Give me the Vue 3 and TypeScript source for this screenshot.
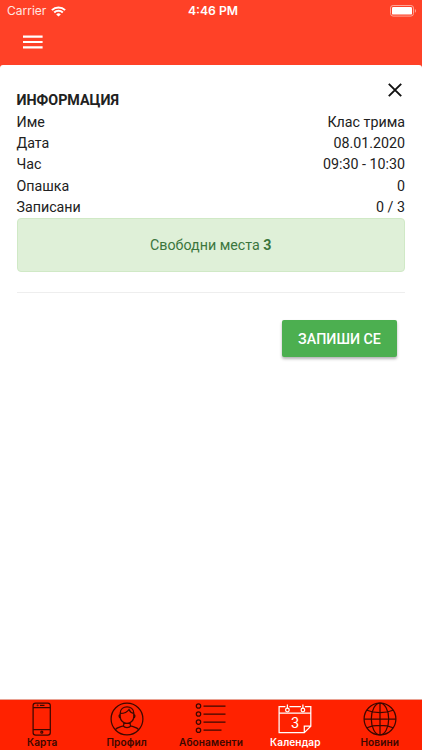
<script setup lang="ts">
interface Row {
  label: string
  value: string
}
interface Tab {
  id: string
  label: string
}

const rows: Row[] = [
  { label: 'Име', value: 'Клас трима' },
  { label: 'Дата', value: '08.01.2020' },
  { label: 'Час', value: '09:30 - 10:30' },
  { label: 'Опашка', value: '0' },
  { label: 'Записани', value: '0 / 3' },
]
const tabs: Tab[] = [
  { id: 'card', label: 'Карта' },
  { id: 'profile', label: 'Профил' },
  { id: 'plans', label: 'Абонаменти' },
  { id: 'calendar', label: 'Календар' },
  { id: 'news', label: 'Новини' },
]
const active = 'calendar'
const freePlaces = 3
</script>

<template>
  <div class="screen">
    <header class="header">
      <div class="status">
        <div class="carrier">
          <span>Carrier</span>
          <svg class="wifi" width="15" height="11" viewBox="0 0 15 11" fill="none" stroke="#fff" stroke-width="2">
            <path d="M.9 4.1a9.4 9.4 0 0 1 13.2 0M3.2 6.5a6.1 6.1 0 0 1 8.6 0" />
            <path d="M7.5 10.6 5.2 8.4a3.3 3.3 0 0 1 4.6 0z" fill="#fff" stroke="none" />
          </svg>
        </div>
        <span class="clock">4:46 PM</span>
        <svg class="battery" width="27" height="12" viewBox="0 0 27 12">
          <rect x=".5" y=".5" width="23" height="10.6" rx="2.6" fill="none" stroke="#ffa597" />
          <rect x="2" y="2" width="20" height="7.6" rx="1.2" fill="#fff" />
          <path d="M24.9 4v3.8c1.5-.6 1.5-3.2 0-3.8z" fill="#ffa597" />
        </svg>
      </div>
      <button class="menu" aria-label="Меню">
        <svg width="20" height="14" viewBox="0 0 20 14" fill="#fff">
          <path d="M0 .6h19.6v2.1H0zM0 6h19.6v2.1H0zM0 11.3h19.6v2.1H0z" />
        </svg>
      </button>
    </header>

    <main class="sheet">
      <div class="top">
        <h1>ИНФОРМАЦИЯ</h1>
        <button class="close" aria-label="Затвори">
          <svg width="14" height="14" viewBox="0 0 14 14" fill="none" stroke="#111" stroke-width="1.9">
            <path d="M.8.8l12.4 12.4M13.2.8.8 13.2" />
          </svg>
        </button>
      </div>
      <dl>
        <div v-for="row in rows" :key="row.label" class="row">
          <dt>{{ row.label }}</dt>
          <dd>{{ row.value }}</dd>
        </div>
      </dl>
      <div class="alert"><span>Свободни места <b>{{ freePlaces }}</b></span></div>
      <div class="actions">
        <button class="join">ЗАПИШИ СЕ</button>
      </div>
    </main>

    <nav class="tabs">
      <div v-for="tab in tabs" :key="tab.id" class="tab" :class="{ active: tab.id === active }">
        <svg class="icon" width="34" height="34" viewBox="0 0 34 34" fill="none" stroke="currentColor" stroke-width="1.25">
          <template v-if="tab.id === 'card'">
            <rect x="8.1" y="1" width="17.2" height="32" rx="2.6" />
            <path d="M8.1 5.5h17.2M8.1 27.5h17.2M15 3.3h4.5" />
            <circle cx="16.8" cy="30.2" r="1" />
            <circle cx="12.6" cy="3.3" r=".3" />
          </template>
          <template v-else-if="tab.id === 'profile'">
            <circle cx="17" cy="17" r="15.9" />
            <path d="M10.2 14.5V11C10.2 2.8 23.8 2.8 23.8 11v3.5c0 9-13.6 9-13.6 0zM10.2 11.4c4.4 0 7.2-1.4 8.8-3.9.9 2.2 2.4 3.5 4.8 3.9M10.2 12.6c-1.6.1-1.4 3.3.3 3.6M23.8 12.6c1.6.1 1.4 3.3-.3 3.6M13.8 20.4v2.3c0 .8-.4 1.2-1.2 1.5-3.5 1.2-6 1.4-7.2 3.4M20.2 20.4v2.3c0 .8.4 1.2 1.2 1.5 3.5 1.2 6 1.4 7.2 3.4M13.2 24c1.6 2 6 2 7.6 0" />
          </template>
          <template v-else-if="tab.id === 'plans'">
            <circle cx="4.5" cy="4" r="2.2" />
            <circle cx="4.5" cy="12" r="2.2" />
            <circle cx="4.5" cy="20.1" r="2.2" />
            <circle cx="4.5" cy="28.2" r="2.2" />
            <path d="M9.5 4h22M9.5 12h22M9.5 20.1h22M9.5 28.2h18" />
          </template>
          <template v-else-if="tab.id === 'calendar'">
            <path d="M7.4 4.5H1.1v26.1h25.2l6.5-6.3V4.5h-5.9M22.9 4.5H11.4M1.1 11.1h31.7M26.3 30.4v-6.2h6.3" />
            <path d="M9.4 2.4v4M24.9 2.4v4" />
            <circle cx="9.4" cy="8" r="1.8" />
            <circle cx="24.9" cy="8" r="1.8" />
            <text x="17.2" y="26" text-anchor="middle" class="day">3</text>
          </template>
          <template v-else>
            <circle cx="17" cy="17" r="15.9" />
            <ellipse cx="17" cy="17" rx="8.7" ry="15.9" />
            <path d="M17 1v32M1 17h32M4 8.3c7 3.2 19 3.2 26 0M4 25.7c7-3.2 19-3.2 26 0" />
          </template>
        </svg>
        <span class="label">{{ tab.label }}</span>
      </div>
    </nav>
  </div>
</template>

<style>
body {
  margin: 0;
}
</style>

<style scoped>
* {
  box-sizing: border-box;
}
.screen {
  display: flex;
  flex-direction: column;
  height: 750px;
  overflow: hidden;
  background: #ff4127;
  color: #212121;
  font-family: Roboto, sans-serif;
}
button {
  border: 0;
  padding: 0;
  background: none;
  font-family: inherit;
}
svg {
  display: block;
}
.header {
  height: 65px;
  flex: none;
  color: #fff;
}
.status {
  display: grid;
  grid-template-columns: 1fr auto 1fr;
  align-items: center;
  height: 22px;
  padding: 0 5px 0 7px;
  font: 12.2px/22px Inter, sans-serif;
}
.carrier {
  display: flex;
  gap: 5px;
  align-items: center;
  color: #ffe6e2;
  font-size: 12px;
}
.clock {
  font-weight: 600;
  padding-left: 2px;
}
.battery {
  justify-self: end;
}
.menu {
  display: block;
  margin: 13px 0 0 23px;
}
.sheet {
  flex: 1;
  padding: 15px 17px 0 16.5px;
  background: #fff;
  border-radius: 3px 3px 0 0;
}
.top {
  display: flex;
  justify-content: space-between;
  height: 31px;
}
h1 {
  margin: 10px 0 0;
  font-size: 14.3px;
  line-height: 21px;
  font-weight: 700;
}
.close {
  height: 14px;
  margin: 3px 3px 0 0;
}
dl {
  height: 107px;
  margin: 0;
  padding-top: 0.5px;
}
.row {
  display: flex;
  justify-content: space-between;
  font-size: 14.25px;
  line-height: 21.4px;
}
dt,
dd {
  margin: 0;
}
.alert {
  display: flex;
  align-items: center;
  justify-content: center;
  height: 54px;
  border: 1px solid #d0e9c6;
  border-radius: 4px;
  background: #dff0d8;
  color: #3c763d;
  font-size: 14.25px;
}
.alert b {
  font-weight: 700;
}
.actions {
  display: flex;
  justify-content: flex-end;
  margin-top: 20px;
  padding: 27px 8px 0 0;
  border-top: 1px solid #eee;
}
.join {
  width: 115px;
  height: 37px;
  border-radius: 2px;
  background: #4caf50;
  color: #fff;
  font-size: 14.25px;
  font-weight: 500;
  box-shadow: 0 2px 3px rgba(0, 0, 0, 0.3);
}
.tabs {
  display: grid;
  grid-template-columns: repeat(5, 84.4px);
  flex: none;
  height: 51px;
  padding-top: 2px;
  background: #ff2200;
  border-top: 1px solid #e9a294;
  color: #3c0800;
}
.tab {
  display: flex;
  flex-direction: column;
  align-items: center;
}
.tab.active {
  color: #fff;
}
.label {
  font: 600 10.1px/13px Inter, sans-serif;
  letter-spacing: 0.1px;
  white-space: nowrap;
}
.day {
  fill: currentColor;
  stroke: none;
  font: 14.5px Roboto, sans-serif;
}
</style>
